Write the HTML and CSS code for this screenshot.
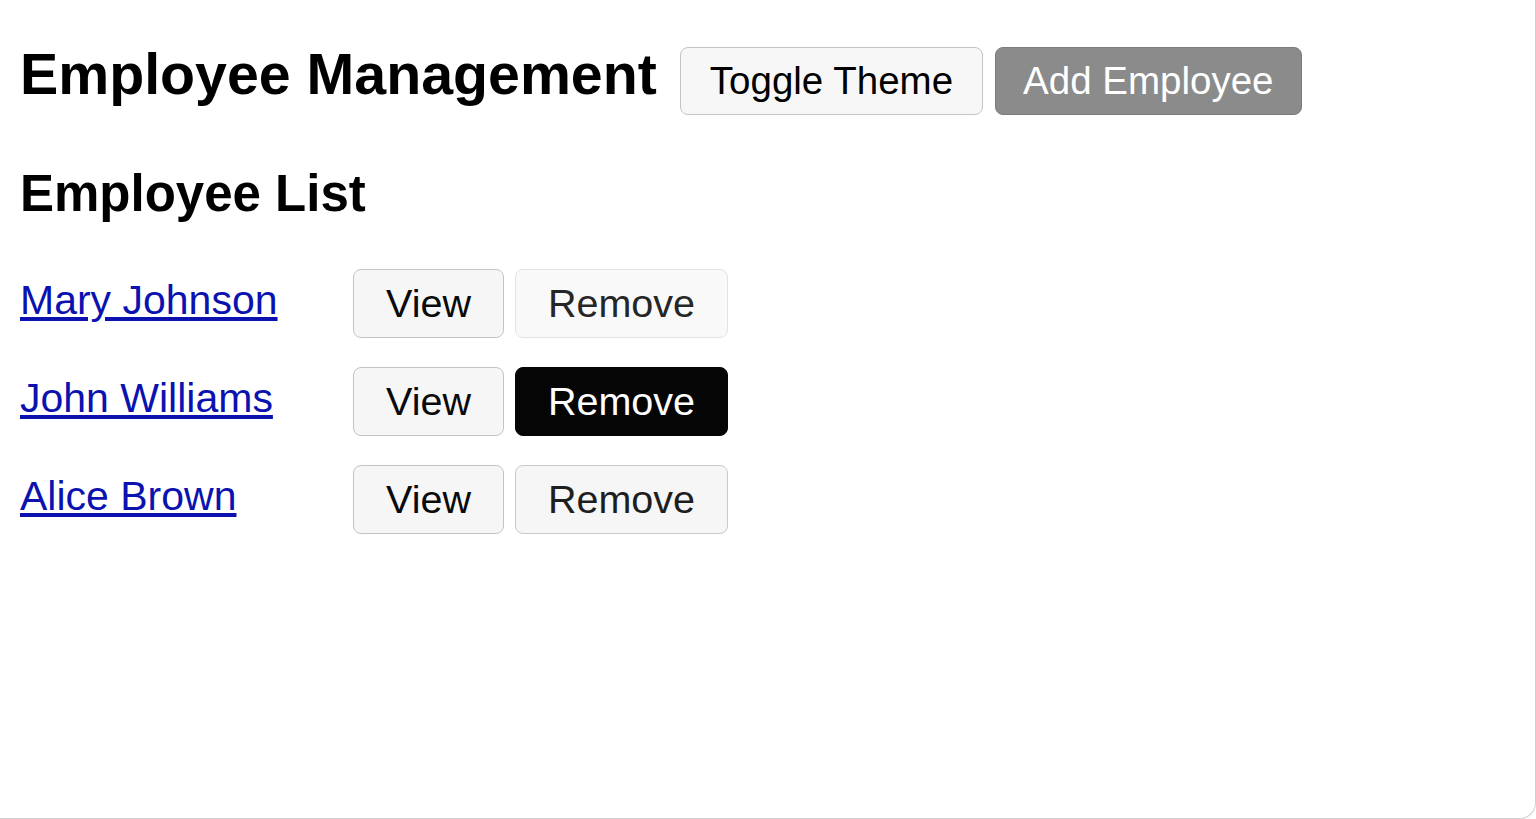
FILE: index.html
```html
<!DOCTYPE html>
<html lang="en">
<head>
<meta charset="utf-8">
<title>Employee Management</title>
<link rel="stylesheet" href="styles.css">
</head>
<body>
<div class="frame">
  <header class="topbar">
    <h1 class="title">Employee Management</h1>
    <button class="btn btn-light">Toggle Theme</button>
    <button class="btn btn-grey">Add Employee</button>
  </header>
  <h2 class="subtitle">Employee List</h2>
  <ul class="list">
    <li class="row">
      <a class="name" href="#">Mary Johnson</a>
      <button class="rbtn view">View</button>
      <button class="rbtn remove remove-faint">Remove</button>
    </li>
    <li class="row">
      <a class="name" href="#">John Williams</a>
      <button class="rbtn view">View</button>
      <button class="rbtn remove remove-dark">Remove</button>
    </li>
    <li class="row">
      <a class="name" href="#">Alice Brown</a>
      <button class="rbtn view">View</button>
      <button class="rbtn remove">Remove</button>
    </li>
  </ul>
</div>
</body>
</html>
```
FILE: styles.css
```css
html, body {
  margin: 0;
  padding: 0;
  background: #ffffff;
}
body {
  font-family: "Liberation Sans", Arial, sans-serif;
  color: #000;
}
.frame {
  box-sizing: border-box;
  width: 1536px;
  height: 819px;
  padding: 42px 20px 0 20px;
  border-right: 1px solid #cfcfcf;
  border-bottom: 1px solid #cfcfcf;
  border-bottom-right-radius: 16px;
  overflow: hidden;
}
.topbar {
  display: flex;
  align-items: baseline;
}
.title {
  margin: 0 23px 0 0;
  font-size: 57.3px;
  line-height: 1.15;
  font-weight: bold;
}
.btn {
  box-sizing: border-box;
  height: 68px;
  padding: 0 29px;
  margin-right: 12px;
  font-family: "Liberation Sans", Arial, sans-serif;
  font-size: 38.5px;
  border-radius: 8px;
  cursor: pointer;
}
.btn-light {
  background: #f7f7f7;
  border: 1px solid #c4c4c4;
  color: #000;
}
.btn-grey {
  background: #8b8b8b;
  border: 1px solid #7c7c7c;
  color: #ffffff;
  padding: 0 27px;
}
.subtitle {
  margin: 50px 0 45px 0;
  font-size: 51px;
  line-height: 1.15;
  font-weight: bold;
}
.list {
  list-style: none;
  margin: 0;
  padding: 0;
  display: flex;
  flex-direction: column;
  gap: 29px;
}
.row {
  display: flex;
  align-items: center;
  gap: 11px;
}
.name {
  flex: 0 0 322px;
  margin-bottom: 6px;
  font-size: 41px;
  color: #0b12b0;
  text-decoration: underline;
}
.rbtn {
  box-sizing: border-box;
  height: 69px;
  padding: 0 32px;
  font-family: "Liberation Sans", Arial, sans-serif;
  font-size: 39.5px;
  border-radius: 8px;
  background: #f6f6f6;
  border: 1px solid #c3c3c3;
  color: #0a0a0a;
  cursor: pointer;
}
.remove {
  color: #1e1e1e;
  border-color: #c9c9c9;
}
.remove-faint {
  background: #f9f9f9;
  border-color: #e3e3e3;
  color: #262626;
}
.remove-dark {
  background: #050505;
  border-color: #050505;
  color: #ffffff;
}
```
